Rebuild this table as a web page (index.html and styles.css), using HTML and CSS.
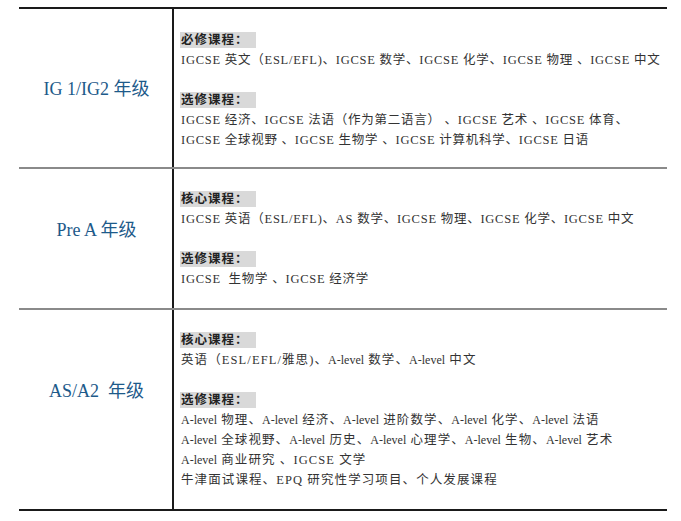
FILE: index.html
```html
<!DOCTYPE html>
<html lang="zh">
<head>
<meta charset="utf-8">
<link rel="stylesheet" href="styles.css">
</head>
<body>
<div class="table">
  <div class="row first">
    <div class="grade g1">IG 1/IG2 年级</div>
    <div class="content">
      <div class="line"><span class="tag">必修课程：</span></div>
      <div class="line">IGCSE 英文（ESL/EFL)、IGCSE 数学、IGCSE 化学、IGCSE 物理 、IGCSE 中文</div>
      <div class="line"></div>
      <div class="line"><span class="tag">选修课程：</span></div>
      <div class="line">IGCSE 经济、IGCSE 法语（作为第二语言） 、IGCSE 艺术 、IGCSE 体育、</div>
      <div class="line">IGCSE 全球视野 、IGCSE 生物学 、IGCSE 计算机科学、IGCSE 日语</div>
    </div>
  </div>
  <div class="row">
    <div class="grade g2">Pre A 年级</div>
    <div class="content">
      <div class="line"><span class="tag">核心课程：</span></div>
      <div class="line">IGCSE 英语（ESL/EFL)、AS 数学、IGCSE 物理、IGCSE 化学、IGCSE 中文</div>
      <div class="line"></div>
      <div class="line"><span class="tag">选修课程：</span></div>
      <div class="line">IGCSE &nbsp;生物学 、IGCSE 经济学</div>
    </div>
  </div>
  <div class="row last">
    <div class="grade g3">AS/A2 &nbsp;年级</div>
    <div class="content">
      <div class="line"><span class="tag">核心课程：</span></div>
      <div class="line">英语（ESL/EFL/雅思)、<span class="al">A-level</span> 数学、<span class="al">A-level</span> 中文</div>
      <div class="line"></div>
      <div class="line"><span class="tag">选修课程：</span></div>
      <div class="line"><span class="al">A-level</span> 物理、<span class="al">A-level</span> 经济、<span class="al">A-level</span> 进阶数学、<span class="al">A-level</span> 化学、<span class="al">A-level</span> 法语</div>
      <div class="line"><span class="al">A-level</span> 全球视野、<span class="al">A-level</span> 历史、<span class="al">A-level</span> 心理学、<span class="al">A-level</span> 生物、<span class="al">A-level</span> 艺术</div>
      <div class="line"><span class="al">A-level</span> 商业研究 、IGCSE 文学</div>
      <div class="line">牛津面试课程、EPQ 研究性学习项目、个人发展课程</div>
    </div>
  </div>
</div>
</body>
</html>
```
FILE: styles.css
```css
html, body {
  margin: 0;
  padding: 0;
  background: #ffffff;
}
body {
  padding: 7px 14px 0 19px;
  font-family: "Liberation Serif", "Noto Sans CJK SC", serif;
}
.table {
  width: 648px;
  border-top: 2px solid #1a1a1a;
  border-bottom: 2px solid #1a1a1a;
}
.row {
  display: grid;
  grid-template-columns: 155px 1fr;
  border-bottom: 2px solid #8a8a8a;
  height: 139px;
}
.row.first {
  height: 158px;
}
.row.last {
  border-bottom: none;
  height: 199px;
}
.grade {
  display: flex;
  align-items: center;
  justify-content: center;
  border-right: 2px solid #1a1a1a;
  color: #1d5a8a;
  font-size: 18px;
  padding-left: 2px;
}
.g1 { padding-bottom: 2px; }
.g2 { padding-bottom: 22px; }
.g3 { padding-bottom: 42px; }
.content {
  padding: 20px 0 0 7px;
  color: #333333;
  font-size: 12.5px;
  letter-spacing: 0.75px;
}
.row.first .content { padding-top: 21px; }
.row.last .content { letter-spacing: 1.1px; }
.line {
  height: 20px;
  line-height: 20px;
  white-space: nowrap;
}
.al {
  font-size: 12px;
  letter-spacing: 0;
}
.tag {
  display: inline-block;
  background: #d9d9d9;
  font-weight: bold;
  color: #222222;
  line-height: 16px;
  padding: 0 7px 0 1px;
  margin-left: -1px;
  letter-spacing: 1px;
}
```
